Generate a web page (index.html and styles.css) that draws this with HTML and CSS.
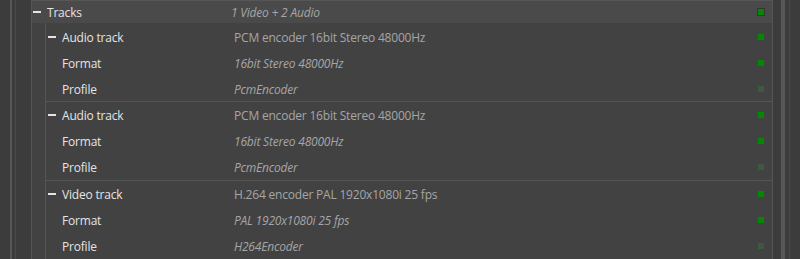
FILE: index.html
```html
<!DOCTYPE html>
<html>
<head>
<meta charset="utf-8">
<link rel="stylesheet" href="styles.css">
</head>
<body>
<div class="panel">
  <div class="gutter">
    <div class="g-fill w10"></div>
    <div class="g-line light w2"></div>
    <div class="g-fill w3"></div>
    <div class="g-line dim"></div>
    <div class="g-fill w15"></div>
    <div class="g-line"></div>
  </div>
  <div class="main">
    <div class="row top">
      <div class="name lvl0"><span class="minus"></span><span class="label">Tracks</span></div>
      <div class="value it v0">1 Video + 2 Audio</div>
      <span class="dot boxed"></span>
    </div>
    <div class="children">
      <div class="group first">
        <div class="row">
          <div class="name lvl1"><span class="minus"></span><span class="label">Audio track</span></div>
          <div class="value">PCM encoder 16bit Stereo 48000Hz</div>
          <span class="dot"></span>
        </div>
        <div class="row">
          <div class="name lvl2"><span class="label">Format</span></div>
          <div class="value it">16bit Stereo 48000Hz</div>
          <span class="dot"></span>
        </div>
        <div class="row">
          <div class="name lvl2"><span class="label">Profile</span></div>
          <div class="value it">PcmEncoder</div>
          <span class="dot dim"></span>
        </div>
      </div>
      <div class="group">
        <div class="row">
          <div class="name lvl1"><span class="minus"></span><span class="label">Audio track</span></div>
          <div class="value">PCM encoder 16bit Stereo 48000Hz</div>
          <span class="dot"></span>
        </div>
        <div class="row">
          <div class="name lvl2"><span class="label">Format</span></div>
          <div class="value it">16bit Stereo 48000Hz</div>
          <span class="dot"></span>
        </div>
        <div class="row">
          <div class="name lvl2"><span class="label">Profile</span></div>
          <div class="value it">PcmEncoder</div>
          <span class="dot dim"></span>
        </div>
      </div>
      <div class="group">
        <div class="row">
          <div class="name lvl1"><span class="minus"></span><span class="label">Video track</span></div>
          <div class="value">H.264 encoder PAL 1920x1080i 25 fps</div>
          <span class="dot"></span>
        </div>
        <div class="row">
          <div class="name lvl2"><span class="label">Format</span></div>
          <div class="value it">PAL 1920x1080i 25 fps</div>
          <span class="dot"></span>
        </div>
        <div class="row">
          <div class="name lvl2"><span class="label">Profile</span></div>
          <div class="value it">H264Encoder</div>
          <span class="dot dim"></span>
        </div>
      </div>
    </div>
  </div>
  <div class="gutter">
    <div class="g-line"></div>
    <div class="g-fill w8"></div>
    <div class="g-line light w4"></div>
    <div class="g-fill w4"></div>
    <div class="g-line dim"></div>
    <div class="g-fill w10"></div>
  </div>
</div>
</body>
</html>
```
FILE: styles.css
```css
html, body {
  margin: 0;
  padding: 0;
  background: #3d3d3d;
}
body {
  font-family: "Open Sans", "Noto Sans", sans-serif;
  font-size: 12px;
  letter-spacing: -0.2px;
}
.panel {
  display: flex;
  width: 800px;
  height: 259px;
  overflow: hidden;
}
.gutter {
  display: flex;
  flex: none;
}
.g-fill { background: #3c3c3c; }
.g-line { width: 1px; background: #555555; }
.g-line.dim { background: #4a4a4a; }
.g-line.light { background: #575757; }
.w2 { width: 2px; }
.w3 { width: 3px; }
.w4 { width: 4px; }
.w8 { width: 8px; }
.w10 { width: 10px; }
.w15 { width: 15px; }
.main {
  flex: 1;
  display: flex;
  flex-direction: column;
  background: #424242;
}
.row {
  height: 26px;
  display: flex;
  align-items: center;
}
.row.top {
  height: 24px;
  background: #4a4a4a;
  border-top: 1px solid #565656;
  box-sizing: border-box;
}
.children {
  margin-left: 13px;
  border-left: 1px solid #555555;
}
.group + .group {
  border-top: 1px solid #555555;
}
.group.first .row {
  padding-top: 2px;
  height: 24px;
}
.name {
  display: flex;
  align-items: center;
  flex: none;
  color: #e4e4e4;
}
.lvl0 { width: 198px; padding-left: 1px; }
.lvl1 { width: 186px; padding-left: 2px; }
.lvl2 { width: 172px; padding-left: 16px; }
.minus {
  width: 8px;
  height: 2px;
  background: #e4e4e4;
  margin-right: 6px;
}
.value {
  flex: 1;
  color: #a6a6a6;
  white-space: nowrap;
}
.it { font-style: italic; }
.dot {
  width: 6px;
  height: 6px;
  background: #008a00;
  margin-right: 8px;
  flex: none;
}
.dot.boxed {
  outline: 1px solid #353535;
}
.dot.dim {
  background: #3c5a3c;
}
```
